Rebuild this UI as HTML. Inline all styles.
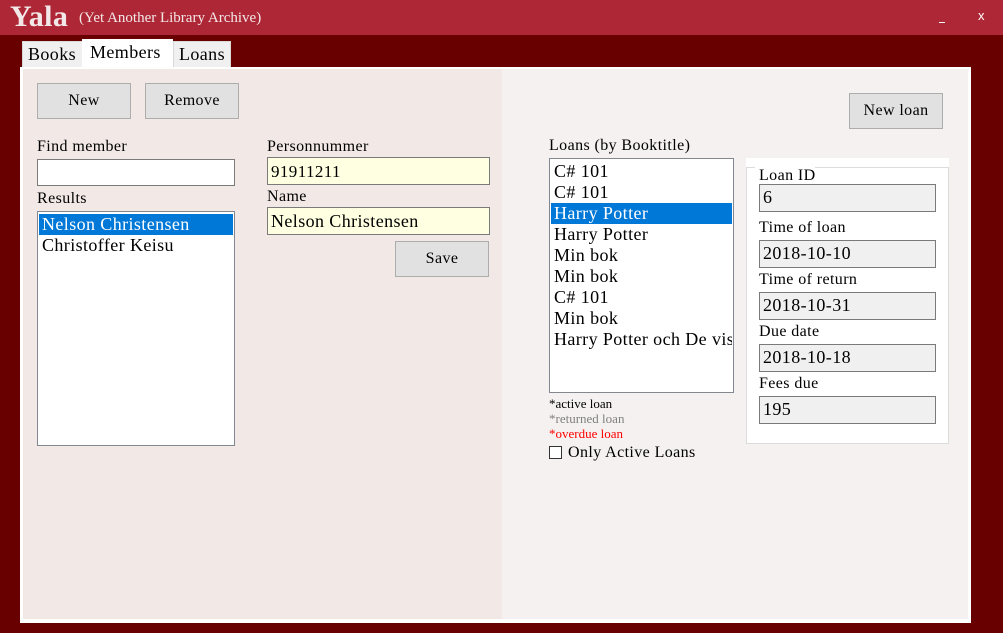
<!DOCTYPE html>
<html><head><meta charset="utf-8"><style>
*{margin:0;padding:0;box-sizing:border-box}
body{width:1003px;height:633px;background:#690000;position:relative;overflow:hidden;font-family:"Liberation Serif",serif;color:#000;letter-spacing:0.4px}
.a{position:absolute}
.btn{position:absolute;background:#e1e1e1;border:1px solid #adadad;font-size:16px;display:flex;align-items:center;justify-content:center}
.lbl{position:absolute;font-size:16px;line-height:18px}
.inp{position:absolute;border:1px solid #7a7a7a;font-size:18px;line-height:24px;padding-left:3px}
.ro{background:#f0f0f0;border-color:#7a7a7a}
.li{height:21px;font-size:18px;line-height:21px;padding-left:3px;white-space:nowrap;overflow:hidden}
</style></head><body>
<div class="a" style="left:0;top:0;width:1003px;height:35px;background:#ae2736"></div>
<div class="a" style="left:10px;top:0;font-size:30px;font-weight:bold;color:#f3e8e8;line-height:34px">Yala</div>
<div class="a" style="left:79px;top:10px;font-size:15px;color:#f3e8e8;letter-spacing:0">(Yet Another Library Archive)</div>
<div class="a" style="left:939px;top:22px;width:6px;height:1px;background:#fff"></div>
<div class="a" style="left:978px;top:8px;font-size:13px;color:#fff;font-family:'Liberation Sans',sans-serif">x</div>
<div class="a" style="left:22px;top:41px;width:61px;height:27px;background:#f0f0f0;border:1px solid #d9d9d9;font-size:18px;line-height:25px;padding-left:5px">Books</div>
<div class="a" style="left:82px;top:39px;width:91px;height:29px;background:#fff;font-size:18px;line-height:26px;padding-left:8px">Members</div>
<div class="a" style="left:173px;top:41px;width:58px;height:27px;background:#f0f0f0;border:1px solid #d9d9d9;font-size:18px;line-height:25px;padding-left:5px">Loans</div>
<div class="a" style="left:20px;top:67px;width:951px;height:556px;background:#fff"></div>
<div class="a" style="left:23px;top:69px;width:479px;height:550px;background:#f2e9e7"></div>
<div class="a" style="left:502px;top:69px;width:466px;height:550px;background:#f5f1f0"></div>

<div class="btn" style="left:37px;top:83px;width:94px;height:36px">New</div>
<div class="btn" style="left:145px;top:83px;width:94px;height:36px">Remove</div>
<div class="lbl" style="left:37px;top:138px">Find member</div>
<div class="inp" style="left:37px;top:159px;width:198px;height:27px;background:#fff"></div>
<div class="lbl" style="left:37px;top:190px">Results</div>
<div class="a" style="left:37px;top:211px;width:198px;height:235px;background:#fff;border:1px solid #828790;padding:2px 1px">
<div class="li" style="background:#0078d7;color:#fff">Nelson Christensen</div>
<div class="li">Christoffer Keisu</div></div>
<div class="lbl" style="left:267px;top:138px">Personnummer</div>
<div class="inp" style="left:267px;top:157px;width:223px;height:28px;background:#ffffe1;line-height:27px;font-size:17px">91911211</div>
<div class="lbl" style="left:267px;top:188px">Name</div>
<div class="inp" style="left:267px;top:207px;width:223px;height:28px;background:#ffffe1;line-height:26px">Nelson Christensen</div>
<div class="btn" style="left:395px;top:241px;width:94px;height:36px">Save</div>

<div class="btn" style="left:849px;top:93px;width:94px;height:36px">New loan</div>
<div class="lbl" style="left:549px;top:137px">Loans (by Booktitle)</div>
<div class="a" style="left:549px;top:158px;width:185px;height:235px;background:#fff;border:1px solid #828790;padding:2px 1px">
<div class="li">C# 101</div><div class="li">C# 101</div>
<div class="li" style="background:#0078d7;color:#fff">Harry Potter</div>
<div class="li">Harry Potter</div><div class="li">Min bok</div><div class="li">Min bok</div>
<div class="li">C# 101</div><div class="li">Min bok</div><div class="li">Harry Potter och De vise</div></div>
<div class="a" style="left:549px;top:396px;font-size:13px;line-height:15px;letter-spacing:0">*active loan<br><span style="color:#808080">*returned loan</span><br><span style="color:#ff0000">*overdue loan</span></div>
<div class="a" style="left:549px;top:446px;width:13px;height:13px;border:1px solid #333;background:#fff"></div>
<div class="lbl" style="left:568px;top:444px">Only Active Loans</div>

<div class="a" style="left:746px;top:158px;width:203px;height:9px;background:#fff"></div>
<div class="a" style="left:746px;top:167px;width:203px;height:277px;border:1px solid #dcdcdc;background:#fff"></div>
<div class="a" style="left:755px;top:167px;width:60px;height:4px;background:#fff"></div>
<div class="lbl" style="left:759px;top:167px">Loan ID</div>
<div class="inp ro" style="left:759px;top:184px;width:177px;height:28px">6</div>
<div class="lbl" style="left:759px;top:219px">Time of loan</div>
<div class="inp ro" style="left:759px;top:240px;width:177px;height:28px">2018-10-10</div>
<div class="lbl" style="left:759px;top:271px">Time of return</div>
<div class="inp ro" style="left:759px;top:292px;width:177px;height:28px">2018-10-31</div>
<div class="lbl" style="left:759px;top:323px">Due date</div>
<div class="inp ro" style="left:759px;top:344px;width:177px;height:28px">2018-10-18</div>
<div class="lbl" style="left:759px;top:375px">Fees due</div>
<div class="inp ro" style="left:759px;top:396px;width:177px;height:28px">195</div>
</body></html>
